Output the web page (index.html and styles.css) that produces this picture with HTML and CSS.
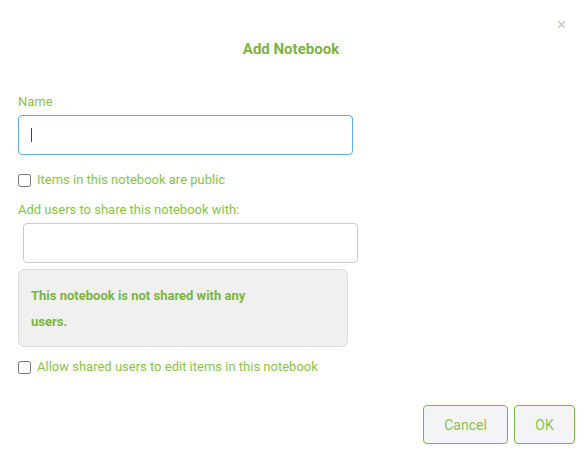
FILE: index.html
```html
<!DOCTYPE html>
<html lang="en">
<head>
  <meta charset="UTF-8">
  <title>Add Notebook</title>
  <link rel="stylesheet" href="styles.css">
</head>
<body>
  <div class="dialog">
    <button class="close">&times;</button>
    <h1>Add Notebook</h1>

    <label class="lbl">Name</label>
    <div class="field-wrap">
      <input type="text" class="field name">
      <span class="caret"></span>
    </div>

    <label class="check"><input type="checkbox"> Items in this notebook are public</label>

    <label class="lbl">Add users to share this notebook with:</label>
    <input type="text" class="field users">

    <div class="shared">
      <p>This notebook is not shared with any<br>users.</p>
    </div>

    <label class="check"><input type="checkbox"> Allow shared users to edit items in this notebook</label>

    <div class="actions">
      <button class="btn">Cancel</button>
      <button class="btn ok">OK</button>
    </div>
  </div>
</body>
</html>
```

FILE: styles.css
```css
:root {
  --green: #7cb342;
  --green-lt: #8bc34a;
  --blue: #5dade2;
  --font: 'Roboto', Arial, sans-serif;
}
* { box-sizing: border-box; margin: 0; padding: 0; }
body {
  font-family: var(--font);
  background: #fff;
  color: var(--green);
}
.dialog {
  position: relative;
  padding: 40px 12px 0 18px;
  display: flex;
  flex-direction: column;
  align-items: flex-start;
}
.close {
  position: absolute;
  top: 14px; right: 21px;
  background: none; border: none;
  color: #c8c8c8;
  font-size: 17px;
  font-family: var(--font);
  cursor: pointer;
}
.dialog h1 {
  align-self: stretch;
  text-align: center;
  font-size: 15px;
  font-weight: 700;
  color: var(--green);
  padding-right: 11px;
  margin-bottom: 36px;
}
.lbl {
  font-size: 13px;
  color: var(--green-lt);
  margin-bottom: 6px;
}
.field-wrap {
  position: relative;
  margin-bottom: 17px;
}
/* fake text cursor */
.caret {
  position: absolute;
  left: 13px; top: 13px;
  width: 1px; height: 14px;
  background: #444;
}
.field {
  width: 335px;
  height: 40px;
  border: 1px solid #ccc;
  border-radius: 4px;
  padding: 0 12px;
  font-family: var(--font);
  font-size: 14px;
  outline: none;
  display: block;
}
.field.name { border-color: var(--blue); }
.field.users {
  margin-left: 5px;
  margin-bottom: 6px;
}
.check {
  display: flex;
  align-items: center;
  gap: 6px;
  font-size: 13px;
  color: var(--green-lt);
  margin-bottom: 15px;
}
.check input {
  width: 13px; height: 13px;
  margin: 1px 0 0 0;
}
.shared {
  width: 330px;
  height: 78px;
  background: #f0f0f0;
  border: 1px solid #ddd;
  border-radius: 6px;
  padding: 13px 12px 0;
  margin-bottom: 12px;
}
.shared p {
  font-size: 13px;
  font-weight: 700;
  line-height: 26px;
  color: var(--green);
}
.actions {
  align-self: stretch;
  display: flex;
  justify-content: flex-end;
  gap: 6px;
  margin-top: 16px;
}
.btn {
  height: 39px;
  padding: 0 15px;
  background: #f3f4f5;
  border: 1px solid var(--green);
  border-radius: 4px;
  color: var(--green-lt);
  font-family: var(--font);
  font-size: 14px;
  cursor: pointer;
}
.btn:first-child { width: 85px; }
.btn.ok { width: 61px; }
```
